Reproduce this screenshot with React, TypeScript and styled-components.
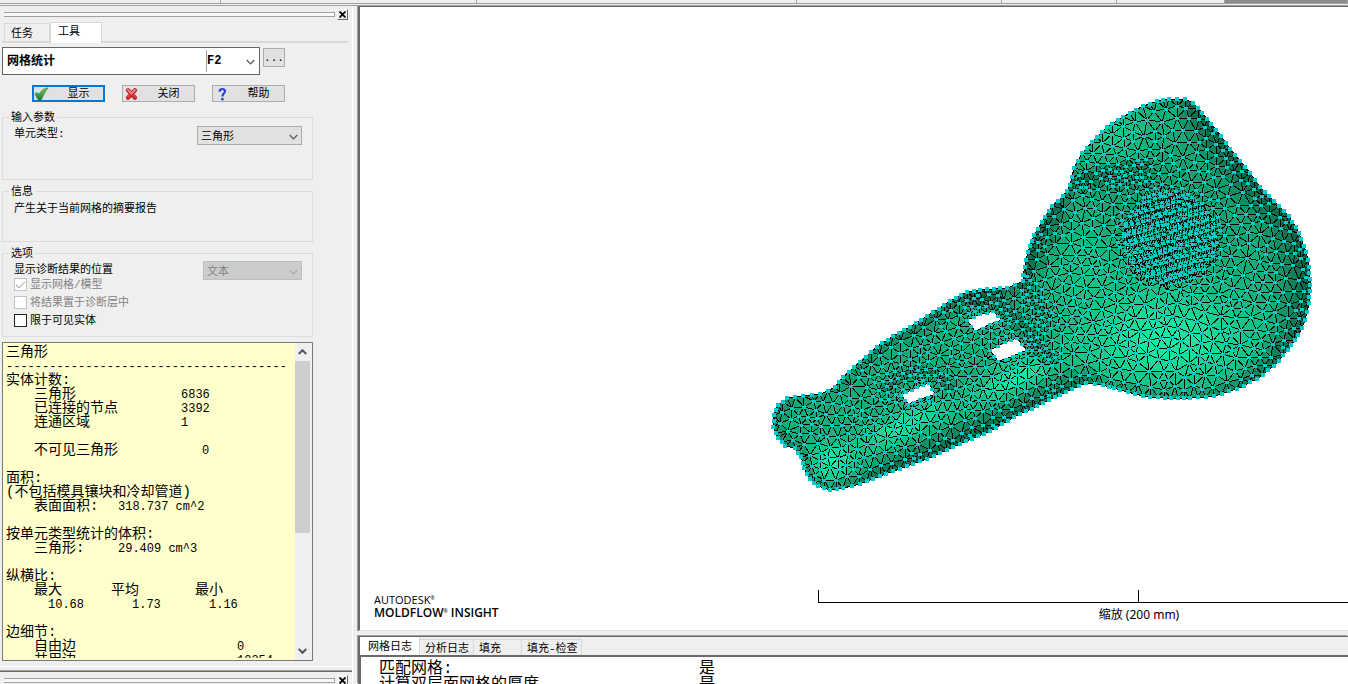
import React from "react";
import styled, { createGlobalStyle, css } from "styled-components";

const mono = `"Liberation Mono", "Noto Sans CJK SC", monospace`;
const cjk = `"Noto Sans CJK SC", sans-serif`;

const c = {
  face: "#efefef",
  line: "#d9d9d9",
  mid: "#a0a0a0",
  dark: "#696969",
  paper: "#ffffcc",
};

const Global = createGlobalStyle`
  *, *::before, *::after { box-sizing: border-box; }
  body { margin: 0; background: ${c.face}; color: #000; font: 11px/14px ${mono}; overflow: hidden; }
  button, select, input { font: inherit; color: inherit; margin: 0; }
`;

/* ---------- frame ---------- */

const Shell = styled.div`
  height: 100vh;
  display: flex;
  flex-direction: column;
`;

const RibbonEdge = styled.div`
  display: grid;
  grid-template-columns: 221px 256px 320px 205px 115px 108px 1fr;
  flex: none;
  height: 4px;
  border-bottom: 1px solid ${c.mid};
`;

const RibbonCell = styled.div<{ $filled?: boolean }>`
  border-right: 1px solid ${c.mid};
  background: ${(p) => (p.$filled ? "#8c8c8c" : c.face)};
`;

const Workspace = styled.div`
  flex: 1;
  min-height: 0;
  display: flex;
  margin-top: 1px;
  border-top: 1px solid ${c.mid};
`;

const Sidebar = styled.div`
  flex: none;
  width: 353px;
  display: flex;
  flex-direction: column;
  border-right: 1px solid #fff;
`;

const Main = styled.main`
  flex: 1;
  min-width: 0;
  display: flex;
  flex-direction: column;
  margin-left: 5px;
`;

/* ---------- sidebar dock ---------- */

const Dock = styled.section`
  flex: 1;
  min-height: 0;
  display: flex;
  flex-direction: column;
  border-bottom: 1px solid #fff;
  padding-bottom: 5px;
`;

const LowerDock = styled.section`
  flex: none;
  height: 13px;
  margin-top: 4px;
  border-top: 1px solid ${c.dark};
  box-shadow: 0 -1px 0 ${c.mid};
  overflow: hidden;
`;

const TitleBar = styled.div`
  display: flex;
  align-items: center;
  gap: 2px;
  flex: none;
  height: 11px;
  margin: 3px 4px 1px 4px;
`;

const Grip = styled.div`
  flex: 1;
  height: 5px;
  border-top: 1px solid ${c.mid};
  border-bottom: 1px solid ${c.mid};
  border-right: 1px solid ${c.mid};
  background: #f8f8f8;
`;

const CloseButton = styled.button`
  width: 11px;
  height: 11px;
  padding: 0;
  display: grid;
  place-items: center;
  background: ${c.face};
  border: 1px solid;
  border-color: #fff ${c.dark} ${c.dark} #fff;
`;

const DockTabs = styled.div`
  display: flex;
  align-items: flex-end;
  flex: none;
  height: 22px;
  margin: 0 4px 0 2px;
  padding-left: 2px;
  border-bottom: 2px solid ${c.line};
`;

const DockTab = styled.button<{ $on?: boolean }>`
  width: ${(p) => (p.$on ? 52 : 46)}px;
  height: ${(p) => (p.$on ? 21 : 18)}px;
  margin-bottom: ${(p) => (p.$on ? -2 : 0)}px;
  padding: 2px 0 0 6px;
  text-align: left;
  background: ${(p) => (p.$on ? "#fff" : c.face)};
  border: 1px solid ${c.line};
  border-bottom: 0;
  ${(p) => p.$on && css`padding: 0 0 2px 7px;`}
`;

const CommandRow = styled.div`
  display: flex;
  align-items: flex-start;
  gap: 3px;
  flex: none;
  margin: 4px 0 0 2px;
`;

const CommandBox = styled.div`
  display: flex;
  align-items: center;
  width: 258px;
  height: 28px;
  background: #fff;
  border: 1px solid #666;
  font: bold 12px/16px ${mono};
`;

const CommandInput = styled.input`
  width: 203px;
  padding: 2px 0 0 4px;
  border: 0;
  outline: 0;
  background: none;
`;

const Shortcut = styled.span`
  flex: 1;
  height: 22px;
  line-height: 22px;
  border-left: 1px solid ${c.mid};
`;

const MoreButton = styled.button`
  width: 22px;
  height: 19px;
  margin-top: 1px;
  padding: 0;
  background: #e1e1e1;
  border: 1px solid #adadad;
  font: 11px/12px ${mono};
`;

const ChevronButton = styled.button`
  width: 17px;
  height: 20px;
  padding: 2px 1px 0 0;
  display: grid;
  place-items: center;
  border: 0;
  background: none;
`;

const Actions = styled.div`
  display: flex;
  gap: 17px;
  flex: none;
  margin: 10px 0 0 32px;
`;

const Action = styled.button<{ $primary?: boolean }>`
  display: flex;
  align-items: center;
  width: 73px;
  height: 17px;
  padding: 0 ${(p) => (p.$primary ? 0 : 1)}px;
  background: #e1e1e1;
  border: ${(p) => (p.$primary ? "2px solid #0078d7" : "1px solid #adadad")};
  svg { flex: none; }
  span { flex: 1; padding-left: 5px; text-align: center; }
`;

const GroupStack = styled.div`
  flex: none;
  margin-top: 8px;
`;

const Group = styled.fieldset<{ $h: number }>`
  width: 311px;
  height: ${(p) => p.$h}px;
  margin: 0 0 4px 2px;
  padding: 0 10px 0 11px;
  border: 1px solid #dcdcdc;
`;

const Legend = styled.legend`
  height: 14px;
  margin-left: -5px;
  padding: 0 2px;
  line-height: 16px;
`;

const FieldRow = styled.div`
  display: flex;
  justify-content: space-between;
  align-items: flex-start;
  height: 18px;
  label { padding-top: 3px; }
`;

const SelectWrap = styled.span<{ $w: number; $off?: boolean }>`
  position: relative;
  display: block;
  flex: none;
  width: ${(p) => p.$w}px;
  height: 19px;
  margin-top: ${(p) => (p.$off ? 1 : 2)}px;
  color: ${(p) => (p.$off ? "#838383" : "#000")};
  select {
    width: 100%;
    height: 100%;
    padding: 2px 0 0 3px;
    appearance: none;
    border: 1px solid ${(p) => (p.$off ? "#bfbfbf" : "#adadad")};
    border-radius: 0;
    background: ${(p) => (p.$off ? "#cccccc" : "#e1e1e1")};
    opacity: 1;
  }
  svg { position: absolute; right: 4px; top: 8px; pointer-events: none; }
`;

const Note = styled.p`
  margin: 4px 0 0;
`;

const Check = styled.label<{ $off?: boolean }>`
  display: flex;
  align-items: flex-start;
  gap: 3px;
  height: 18px;
  color: ${(p) => (p.$off ? "#838383" : "#000")};
  input {
    appearance: none;
    width: 13px;
    height: 13px;
    background: #fff;
    border: 1px solid ${(p) => (p.$off ? "#c4c4c4" : "#222")};
    display: grid;
    place-items: center;
  }
  input:checked::before {
    content: "";
    width: 9px;
    height: 5px;
    margin-top: -3px;
    border-left: 1px solid #aaa;
    border-bottom: 1px solid #aaa;
    rotate: -45deg;
  }
`;

const Report = styled.div`
  flex: 1;
  min-height: 0;
  display: flex;
  width: 311px;
  margin: 1px 0 0 2px;
  border: 1px solid #7a7a7a;
  background: ${c.paper};
`;

const ReportText = styled.div`
  flex: 1;
  min-width: 0;
  overflow: hidden;
  padding: 2px 0 0 3px;
  margin-bottom: 2px;
  font: 12px/16px ${mono};
  white-space: pre;
`;

const Line = styled.div`
  display: flex;
  height: 14px;
`;

const Cell = styled.span<{ $n?: number; $cn?: boolean }>`
  flex: none;
  width: ${(p) => (p.$n ? p.$n * 7 + "px" : "auto")};
  ${(p) => p.$cn && css`font: 14px/14px ${mono};`}
`;

const ScrollBar = styled.div`
  display: flex;
  flex-direction: column;
  align-items: center;
  width: 17px;
  padding-right: 2px;
  background: #f0f0f0;
`;

const ScrollButton = styled.button`
  width: 15px;
  height: 18px;
  padding: 0;
  display: grid;
  place-items: center;
  border: 0;
  background: none;
`;

const Thumb = styled.div`
  width: 15px;
  flex: 172;
  background: #cdcdcd;
`;

const Track = styled.div`
  flex: 109;
`;

/* ---------- main area ---------- */

const Canvas = styled.section`
  position: relative;
  flex: 1;
  min-height: 0;
  display: flex;
  flex-direction: column;
  justify-content: flex-end;
  background: #fff;
  border-left: 2px solid ${c.dark};
  border-top: 1px solid ${c.dark};
  border-bottom: 1px solid #e3e3e3;
  box-shadow: -1px 0 0 ${c.mid};
`;

const ModelSvg = styled.svg`
  position: absolute;
  inset: 0;
  width: 100%;
  height: 100%;
`;

const CanvasFooter = styled.div`
  position: relative;
  display: flex;
  align-items: flex-start;
  justify-content: space-between;
  height: 40px;
  overflow: hidden;
`;

const Brand = styled.div`
  padding: 3px 0 0 14px;
  font: 400 11px/13px "Open Sans", sans-serif;
  strong { display: block; font-weight: 600; font-size: 12px; }
  sup { font-size: 5px; line-height: 10px; vertical-align: top; }
`;

const Ruler = styled.div`
  width: 530px;
  overflow: hidden;
`;

const RulerSpan = styled.div`
  display: grid;
  grid-template-columns: 320px 1fr;
  width: 642px;
  height: 13px;
  border: solid #000;
  border-width: 0 1px 1px 1px;
  i { border-right: 1px solid #000; }
`;

const RulerLabel = styled.div`
  width: 642px;
  padding-top: 3px;
  text-align: center;
  font: 12px/18px "Noto Sans", ${cjk};
`;

const LogPanel = styled.section`
  flex: none;
  height: 48px;
  margin-top: 5px;
  display: flex;
  flex-direction: column;
  border-left: 2px solid ${c.dark};
  border-top: 1px solid ${c.dark};
  box-shadow: -1px -1px 0 ${c.mid};
`;

const LogTabs = styled.div`
  display: flex;
  align-items: flex-end;
  flex: none;
  height: 18px;
`;

const LogTab = styled.button<{ $w: number; $on?: boolean }>`
  width: ${(p) => p.$w}px;
  height: ${(p) => (p.$on ? 18 : 16)}px;
  padding: 2px 0 0 ${(p) => (p.$on ? 8 : 5)}px;
  text-align: left;
  white-space: nowrap;
  background: ${(p) => (p.$on ? "#fff" : c.face)};
  border: 0 solid ${c.line};
  border-width: ${(p) => (p.$on ? "0" : "1px")} 1px 0 0;
`;

const Log = styled.div`
  flex: 1;
  overflow: hidden;
  padding: 4px 0 0 18px;
  background: #fff;
  border-left: 1px solid ${c.dark};
  border-top: 2px solid ${c.dark};
  font: 16px/16px ${mono};
`;

const LogLine = styled.div`
  display: grid;
  grid-template-columns: 320px 1fr;
`;

/* ---------- mesh ---------- */

type P = [number, number];

// Outline vertices: x, y and the depth of the band that curves away from the viewer.
const outline: [number, number, number][] = [
  [1169, 99, 10], [1185, 99, 18], [1193, 103, 24], [1202, 113, 30], [1211, 124, 32], [1221, 136, 34],
  [1230, 149, 34], [1240, 161, 34], [1250, 173, 34], [1260, 187, 36], [1274, 201, 38], [1289, 216, 40],
  [1299, 233, 42], [1306, 252, 44], [1309, 267, 44], [1310, 285, 44], [1309, 303, 42], [1305, 320, 38],
  [1298, 335, 34], [1288, 350, 30], [1274, 366, 26], [1257, 379, 22], [1237, 389, 18], [1214, 396, 15],
  [1190, 398, 13], [1165, 398, 12], [1143, 396, 12], [1120, 390, 12], [1103, 385, 14], [1086, 383, 22],
  [1072, 389, 28], [1043, 403, 30], [1020, 414, 30], [990, 431, 28], [960, 444, 27], [927, 459, 25],
  [893, 471, 22], [860, 484, 16], [843, 488, 13], [830, 490, 11], [818, 486, 12], [810, 479, 13],
  [804, 468, 13], [801, 457, 12], [795, 448, 12], [785, 446, 13], [778, 438, 13], [773, 427, 14],
  [774, 415, 14], [778, 405, 14], [787, 398, 12], [803, 396, 9], [820, 394, 9], [835, 387, 11],
  [843, 377, 12], [860, 362, 13], [877, 347, 15], [893, 336, 16], [910, 327, 17], [927, 316, 18],
  [950, 301, 20], [967, 292, 20], [987, 289, 20], [1007, 288, 14], [1023, 281, 14], [1023, 275, 22],
  [1028, 252, 30], [1034, 235, 32], [1042, 222, 32], [1052, 206, 28], [1063, 196, 18], [1070, 185, 8],
  [1074, 168, 7], [1082, 153, 6], [1092, 142, 6], [1107, 127, 5], [1123, 117, 5], [1143, 106, 6], [1157, 101, 7],
];

const holes: P[][] = [
  [[967, 320], [980, 314], [993, 311], [1002, 320], [990, 324], [975, 331]],
  [[990, 350], [1005, 342], [1017, 338], [1027, 350], [1013, 356], [998, 361]],
  [[901, 395], [917, 387], [929, 383], [935, 394], [920, 399], [908, 404]],
];

const creases: { pts: P[]; r: number; dark: number }[] = [
  { pts: [[1073, 186], [1085, 177], [1100, 171], [1125, 165], [1150, 165]], r: 5, dark: 0.25 },
  { pts: [[1085, 184], [1110, 180], [1145, 178]], r: 9, dark: 0.22 },
  { pts: [[975, 300], [997, 303], [1012, 314], [1026, 330], [1038, 348], [1052, 358]], r: 8, dark: 0.3 },
  { pts: [[888, 388], [900, 377], [918, 371], [936, 374], [950, 386]], r: 6, dark: 0.26 },
  { pts: [[1023, 284], [1035, 300], [1045, 325]], r: 9, dark: 0.18 },
];

const grill = { x: 1170, y: 236, r: 47, tilt: -0.3 };

const segDist = (x: number, y: number, ax: number, ay: number, bx: number, by: number) => {
  const dx = bx - ax, dy = by - ay;
  const t = Math.max(0, Math.min(1, ((x - ax) * dx + (y - ay) * dy) / (dx * dx + dy * dy)));
  const px = ax + t * dx, py = ay + t * dy;
  return { d: Math.hypot(x - px, y - py), t, px, py };
};

const inside = (x: number, y: number, poly: readonly (readonly number[])[]) => {
  let r = false;
  for (let i = 0, j = poly.length - 1; i < poly.length; j = i++) {
    const [xi, yi] = poly[i], [xj, yj] = poly[j];
    if (yi > y !== yj > y && x < ((xj - xi) * (y - yi)) / (yj - yi) + xi) r = !r;
  }
  return r;
};

const edgeInfo = (x: number, y: number) => {
  let best = { d: 1e9, w: 1, nx: 1, ny: 0 };
  for (let i = 0; i < outline.length; i++) {
    const a = outline[i], b = outline[(i + 1) % outline.length];
    const s = segDist(x, y, a[0], a[1], b[0], b[1]);
    if (s.d < best.d) {
      const l = s.d || 1;
      best = { d: s.d, w: a[2] + (b[2] - a[2]) * s.t, nx: (x - s.px) / l, ny: (y - s.py) / l };
    }
  }
  return best;
};

const polyDist = (x: number, y: number, pts: P[], closed = false) => {
  let d = 1e9;
  const n = closed ? pts.length : pts.length - 1;
  for (let i = 0; i < n; i++) {
    const a = pts[i], b = pts[(i + 1) % pts.length];
    d = Math.min(d, segDist(x, y, a[0], a[1], b[0], b[1]).d);
  }
  return d;
};

const triangulate = (pts: P[]) => {
  const all: P[] = [...pts, [-4000, -4000], [8000, -4000], [1000, 9000]];
  const n = pts.length;
  type T = { a: number; b: number; c: number; x: number; y: number; r: number };
  const make = (a: number, b: number, cc: number): T => {
    const [ax, ay] = all[a], [bx, by] = all[b], [cx, cy] = all[cc];
    const D = 2 * (ax * (by - cy) + bx * (cy - ay) + cx * (ay - by)) || 1e-9;
    const A = ax * ax + ay * ay, B = bx * bx + by * by, C = cx * cx + cy * cy;
    const x = (A * (by - cy) + B * (cy - ay) + C * (ay - by)) / D;
    const y = (A * (cx - bx) + B * (ax - cx) + C * (bx - ax)) / D;
    return { a, b, c: cc, x, y, r: (ax - x) ** 2 + (ay - y) ** 2 };
  };
  // Points arrive from left to right, so a triangle whose circle is behind the sweep is final.
  const order = pts.map((_, i) => i).sort((i, j) => pts[i][0] - pts[j][0]);
  let open: T[] = [make(n, n + 1, n + 2)];
  const done: T[] = [];
  for (const i of order) {
    const [x, y] = all[i];
    const next: T[] = [];
    const rim = new Map<number, [number, number]>();
    for (const t of open) {
      const dx = x - t.x;
      if (dx > 0 && dx * dx > t.r) { done.push(t); continue; }
      if (dx * dx + (y - t.y) ** 2 < t.r) {
        for (const [p, q] of [[t.a, t.b], [t.b, t.c], [t.c, t.a]]) {
          const k = Math.min(p, q) * 10000 + Math.max(p, q);
          if (rim.has(k)) rim.delete(k); else rim.set(k, [p, q]);
        }
      } else next.push(t);
    }
    rim.forEach(([p, q]) => next.push(make(p, q, i)));
    open = next;
  }
  return [...done, ...open].filter((t) => t.a < n && t.b < n && t.c < n).map((t) => [t.a, t.b, t.c]);
};

const buildMesh = () => {
  let seed = 20177;
  const rnd = () => {
    seed = (seed * 1664525 + 1013904223) >>> 0;
    return seed / 4294967296;
  };
  const CELL = 12;
  const pts: P[] = [];
  const buckets = new Map<number, number[]>();
  const key = (x: number, y: number) => Math.floor(x / CELL) * 1000 + Math.floor(y / CELL);
  const add = (x: number, y: number) => {
    // a hair of jitter keeps the circumcircle tests away from ties
    pts.push([x + rnd() * 0.01, y + rnd() * 0.01]);
    const k = key(x, y);
    if (!buckets.has(k)) buckets.set(k, []);
    buckets.get(k)!.push(pts.length - 1);
  };
  const along = (poly: readonly (readonly number[])[], step: number) => {
    poly.forEach((a, i) => {
      const b = poly[(i + 1) % poly.length];
      const n = Math.max(1, Math.round(Math.hypot(b[0] - a[0], b[1] - a[1]) / step));
      for (let k = 0; k < n; k++) add(a[0] + ((b[0] - a[0]) * k) / n, a[1] + ((b[1] - a[1]) * k) / n);
    });
  };
  along(outline, 7);
  const rimCount = pts.length;
  holes.forEach((h) => along(h, 7));

  const cs = Math.cos(grill.tilt), sn = Math.sin(grill.tilt);
  let slots = "";
  let gaps = "";
  for (let row = -5; row <= 5; row++) {
    for (const off of [0, 4]) {
      const v = row * 9 + off;
      const half = Math.sqrt(Math.max(0, grill.r ** 2 - v * v));
      for (let u = -half + rnd() * 3; u <= half; u += 4.6 + rnd() * 2.2) {
        const x = grill.x + u * cs - v * sn, y = grill.y + u * sn + v * cs + rnd() * 1.6;
        add(x, y);
        if (off === 4) {
          const sx = Math.round(x + 1), sy = Math.round(y + 2);
          slots += `M${sx} ${sy}l-2 4M${sx + 2} ${sy}l-1 3`;
          if (rnd() < 0.12) gaps += `M${sx - 1} ${sy + 1}h1v1h-1z`;
        }
      }
    }
  }
  const fixed = pts.length;

  for (let i = 0; i < 80000; i++) {
    const x = 770 + rnd() * 545, y = 97 + rnd() * 396;
    if (!inside(x, y, outline) || holes.some((h) => inside(x, y, h))) continue;
    const g = Math.hypot(x - grill.x, y - grill.y);
    if (g < grill.r + 2) continue;
    const e = edgeInfo(x, y);
    const q = Math.min(1, (e.d + 1) / e.w);
    const size = y > 300 && x < 1060 ? 8 : 8.8;
    let hn = size * Math.max(0.4, Math.sqrt(1 - (1 - q) ** 2));
    let ht = size;
    const near = Math.min(
      ...creases.map((k) => polyDist(x, y, k.pts) / k.r),
      ...holes.map((h) => polyDist(x, y, h, true) / 5),
    );
    if (near < 1) { hn = Math.min(hn, 4.6); ht = 6.4; }
    if (g < grill.r + 10) { hn = Math.min(hn, 6); ht = 7; }
    let ok = true;
    for (let gx = -1; gx <= 1 && ok; gx++)
      for (let gy = -1; gy <= 1 && ok; gy++)
        for (const j of buckets.get(key(x + gx * CELL, y + gy * CELL)) || []) {
          const dx = pts[j][0] - x, dy = pts[j][1] - y;
          const a = dx * e.nx + dy * e.ny, b = -dx * e.ny + dy * e.nx;
          if ((a / hn) ** 2 + (b / ht) ** 2 < 1) { ok = false; break; }
        }
    if (ok) add(x, y);
  }

  let tris = triangulate(pts);
  for (let pass = 0; pass < 3; pass++) {
    const sum = pts.map(() => [0, 0, 0]);
    tris.forEach((t) => t.forEach((a) => t.forEach((b) => {
      if (a !== b) { sum[a][0] += pts[b][0]; sum[a][1] += pts[b][1]; sum[a][2]++; }
    })));
    for (let i = fixed; i < pts.length; i++) {
      const s = sum[i];
      if (s[2]) pts[i] = [pts[i][0] * 0.5 + (s[0] / s[2]) * 0.5, pts[i][1] * 0.5 + (s[1] / s[2]) * 0.5];
    }
    tris = triangulate(pts);
  }

  const glow = (x: number, y: number, cx: number, cy: number, rx: number, ry: number, a = 0) => {
    const dx = x - cx, dy = y - cy, C = Math.cos(a), S = Math.sin(a);
    return Math.exp(-(((dx * C + dy * S) / rx) ** 2) - ((-dx * S + dy * C) / ry) ** 2);
  };
  const shadeAt = (x: number, y: number) => {
    const e = edgeInfo(x, y);
    let s = 0.64;
    s += 0.36 * glow(x, y, 1165, 338, 85, 46);
    s += 0.34 * glow(x, y, 1015, 380, 40, 16, -0.45);
    s += 0.34 * glow(x, y, 905, 425, 45, 13, -0.45);
    s += 0.36 * glow(x, y, 832, 462, 20, 18);
    s += 0.18 * glow(x, y, 1112, 135, 35, 30);
    s += 0.12 * glow(x, y, 1085, 260, 30, 40);
    s -= 0.1 * glow(x, y, 1170, 205, 70, 50);
    const q = Math.max(0, 1 - e.d / e.w);
    s -= 0.46 * q ** 1.2 * Math.min(1, e.w / 24);
    creases.forEach((k) => { s -= k.dark * Math.exp(-((polyDist(x, y, k.pts) / k.r) ** 2)); });
    return Math.max(0, Math.min(1, s));
  };

  const LEVELS = 28;
  const fills: string[] = Array(LEVELS + 1).fill("");
  const edges = new Map<number, string>();
  const r = pts.map(([x, y]) => [Math.round(x), Math.round(y)]);
  for (const [a, b, d] of tris) {
    const x = (pts[a][0] + pts[b][0] + pts[d][0]) / 3, y = (pts[a][1] + pts[b][1] + pts[d][1]) / 3;
    if (!inside(x, y, outline) || holes.some((h) => inside(x, y, h))) continue;
    const lv = Math.round(shadeAt(x, y) * LEVELS);
    fills[lv] += `M${r[a]}L${r[b]}L${r[d]}z`;
    for (const [p, q] of [[a, b], [b, d], [d, a]]) {
      edges.set(Math.min(p, q) * 10000 + Math.max(p, q), `M${r[p]}L${r[q]}`);
    }
  }
  const mix = (t: number) => `rgb(${Math.round(10 + 13 * t)},${Math.round(62 + 172 * t)},${Math.round(44 + 120 * t)})`;
  return {
    fills: fills.map((d, i) => ({ d, color: mix(i / LEVELS) })).filter((f) => f.d),
    edges: [...edges.values()].join(""),
    nodes: r.map(([x, y], i) => (i < rimCount ? `M${x - 2} ${y - 2}h4v4h-4z` : `M${x - 2} ${y - 1}h4v3h-4z`)).join(""),
    slots,
    gaps,
  };
};

const mesh = buildMesh();

const Model = () => (
  <ModelSvg role="img" aria-label="三角形网格模型" shapeRendering="crispEdges">
    <g transform="translate(-360 -7)">
      {mesh.fills.map((f) => (
        <path key={f.color} d={f.d} fill={f.color} stroke={f.color} />
      ))}
      <path d={mesh.edges} fill="none" stroke="#000" strokeWidth="1" />
      <path d={mesh.nodes} fill="#00cccc" />
      <path d={mesh.slots} fill="none" stroke="#04120e" strokeWidth="1" />
      <path d={mesh.gaps} fill="#fff" />
    </g>
  </ModelSvg>
);

/* ---------- icons ---------- */

const Chevron = ({ up, bold, color = "#555" }: { up?: boolean; bold?: boolean; color?: string }) => (
  <svg width="9" height="6" viewBox="0 0 9 6" fill="none" stroke={color} strokeWidth={bold ? 2 : 1.2} aria-hidden>
    <path d={up ? "M.7 5l3.8-3.8L8.3 5" : "M.7 1l3.8 3.8L8.3 1"} />
  </svg>
);

const CloseGlyph = () => (
  <svg width="7" height="7" viewBox="0 0 7 7" stroke="#000" strokeWidth="1.8" aria-hidden>
    <path d="M.5.5l6 6M6.5.5l-6 6" />
  </svg>
);

const TickIcon = () => (
  <svg width="15" height="14" viewBox="0 0 15 14" aria-hidden>
    <defs>
      <linearGradient id="tick" x1="0" y1="0" x2="0" y2="1">
        <stop offset="0" stopColor="#7cc36c" />
        <stop offset="1" stopColor="#1f7a1c" />
      </linearGradient>
    </defs>
    <path d="M1 7.5C1.5 5.5 4 5 5 7.5 6.5 4.5 9 2 12.5 1h1.5C11.5 4 9.5 8 7.5 12.5 6.5 13.5 4.5 13.3 3.8 12.3z" fill="url(#tick)" stroke="#2a7d26" strokeWidth=".6" />
  </svg>
);

const CrossIcon = () => (
  <svg width="15" height="14" viewBox="0 0 15 14" aria-hidden>
    <path d="M4 3.3l7 7.4M11 3.3l-7 7.4" stroke="#c2202b" strokeWidth="4.2" strokeLinecap="round" />
    <path d="M4 3l3.5 3.5L11 3" fill="none" stroke="#ee8086" strokeWidth="2" strokeLinecap="round" />
    <path d="M6 7.5l-2 2.5M8.5 7l2.5 3" stroke="#e2424b" strokeWidth="1.6" strokeLinecap="round" />
  </svg>
);

const HelpIcon = () => (
  <svg width="15" height="14" viewBox="0 0 15 14" fill="none" stroke="#2244d8" strokeWidth="2.2" aria-hidden>
    <path d="M5.5 4.8C5.5 1 11.3 1.2 11 4.5 10.8 6.5 8.5 6.3 8.5 9.5" />
    <circle cx="8.4" cy="12.2" r=".7" strokeWidth="1.4" />
  </svg>
);

/* ---------- content ---------- */

type Seg = [text: string, cells?: number];

const report: Seg[][] = [
  [["三角形"]],
  [["-".repeat(39)]],
  [["实体计数:"]],
  [["", 4], ["三角形", 21], ["6836"]],
  [["", 4], ["已连接的节点", 21], ["3392"]],
  [["", 4], ["连通区域", 21], ["1"]],
  [],
  [["", 4], ["不可见三角形", 24], ["0"]],
  [],
  [["面积:"]],
  [["(不包括模具镶块和冷却管道)"]],
  [["", 4], ["表面面积:", 12], ["318.737 cm^2"]],
  [],
  [["按单元类型统计的体积:"]],
  [["", 4], ["三角形:", 12], ["29.409 cm^3"]],
  [],
  [["纵横比:"]],
  [["", 4], ["最大", 11], ["平均", 12], ["最小"]],
  [["", 6], ["10.68", 12], ["1.73", 11], ["1.16"]],
  [],
  [["边细节:"]],
  [["", 4], ["自由边", 29], ["0"]],
  [["", 4], ["共用边", 29], ["10254"]],
];

const TitleStrip = ({ label }: { label: string }) => (
  <TitleBar>
    <Grip />
    <CloseButton aria-label={label}><CloseGlyph /></CloseButton>
  </TitleBar>
);

const Groups = () => (
  <GroupStack>
    <Group $h={70}>
      <Legend>输入参数</Legend>
      <FieldRow>
        <label htmlFor="element-type">单元类型:</label>
        <SelectWrap $w={105}>
          <select id="element-type"><option>三角形</option></select>
          <Chevron />
        </SelectWrap>
      </FieldRow>
    </Group>
    <Group $h={58}>
      <Legend>信息</Legend>
      <Note>产生关于当前网格的摘要报告</Note>
    </Group>
    <Group $h={91}>
      <Legend>选项</Legend>
      <FieldRow>
        <label htmlFor="result-place">显示诊断结果的位置</label>
        <SelectWrap $w={99} $off>
          <select id="result-place" disabled><option>文本</option></select>
          <Chevron color="#aaa" />
        </SelectWrap>
      </FieldRow>
      <Check $off><input type="checkbox" defaultChecked disabled /><span>显示网格/模型</span></Check>
      <Check $off><input type="checkbox" disabled /><span>将结果置于诊断层中</span></Check>
      <Check><input type="checkbox" /><span>限于可见实体</span></Check>
    </Group>
  </GroupStack>
);

const App = () => (
  <>
    <Global />
    <Shell>
      <RibbonEdge>
        {[0, 1, 2, 3, 4, 5].map((i) => <RibbonCell key={i} />)}
        <RibbonCell $filled />
      </RibbonEdge>
      <Workspace>
        <Sidebar>
          <Dock>
            <TitleStrip label="关闭工具面板" />
            <DockTabs role="tablist">
              <DockTab role="tab">任务</DockTab>
              <DockTab role="tab" aria-selected $on>工具</DockTab>
            </DockTabs>
            <CommandRow>
              <CommandBox>
                <CommandInput aria-label="命令" defaultValue="网格统计" />
                <Shortcut>F2</Shortcut>
                <ChevronButton aria-label="展开命令"><Chevron /></ChevronButton>
              </CommandBox>
              <MoreButton>...</MoreButton>
            </CommandRow>
            <Actions>
              <Action $primary><TickIcon /><span>显示</span></Action>
              <Action><CrossIcon /><span>关闭</span></Action>
              <Action><HelpIcon /><span>帮助</span></Action>
            </Actions>
            <Groups />
            <Report>
              <ReportText>
                {report.map((line, i) => (
                  <Line key={i}>
                    {line.map(([text, n], k) => (
                      <Cell key={k} $n={n} $cn={/[\u4e00-\u9fff]/.test(text)}>{text}</Cell>
                    ))}
                  </Line>
                ))}
              </ReportText>
              <ScrollBar>
                <ScrollButton aria-label="向上滚动"><Chevron up bold /></ScrollButton>
                <Thumb />
                <Track />
                <ScrollButton aria-label="向下滚动"><Chevron bold /></ScrollButton>
              </ScrollBar>
            </Report>
          </Dock>
          <LowerDock><TitleStrip label="关闭下方面板" /></LowerDock>
        </Sidebar>
        <Main>
          <Canvas>
            <Model />
            <CanvasFooter>
              <Brand>AUTODESK<sup>®</sup><strong>MOLDFLOW<sup>®</sup> INSIGHT</strong></Brand>
              <Ruler>
                <RulerSpan><i /></RulerSpan>
                <RulerLabel>缩放 (200 mm)</RulerLabel>
              </Ruler>
            </CanvasFooter>
          </Canvas>
          <LogPanel>
            <LogTabs role="tablist">
              <LogTab role="tab" aria-selected $on $w={60}>网格日志</LogTab>
              <LogTab role="tab" $w={54}>分析日志</LogTab>
              <LogTab role="tab" $w={48}>填充</LogTab>
              <LogTab role="tab" $w={60}>填充-检查</LogTab>
            </LogTabs>
            <Log>
              <LogLine><span>匹配网格:</span><span>是</span></LogLine>
              <LogLine><span>计算双层面网格的厚度</span><span>是</span></LogLine>
            </Log>
          </LogPanel>
        </Main>
      </Workspace>
    </Shell>
  </>
);

export default App;
